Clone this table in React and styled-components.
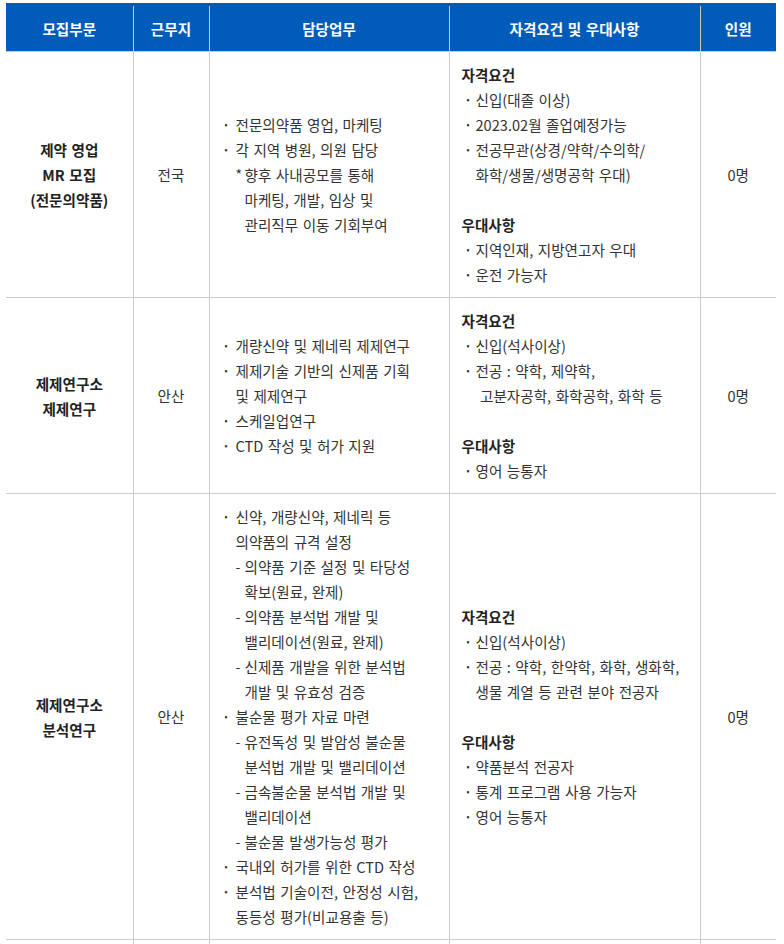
import React from "react"
import styled, { createGlobalStyle } from "styled-components"

const BLUE = "#005cb8"
const LINE = "#cccccc"

const GlobalStyle = createGlobalStyle`
  body {
    margin: 0;
    background: #fff;
    font-family: "Noto Sans CJK KR", "Noto Sans", sans-serif;
    color: #333;
  }
`

const Wrap = styled.div`
  padding: 3px 8px 0 6px;
`

const Table = styled.table`
  width: 770px;
  border-collapse: collapse;
  table-layout: fixed;
  border-top: 3px solid ${BLUE};
  font-size: 14.6px;
  line-height: 25px;
  word-spacing: 1.2px;
`

const HeadCell = styled.th`
  height: 45px;
  padding: 0;
  background: ${BLUE};
  color: #fff;
  font-weight: 700;
  text-align: center;
  border-bottom: 1px solid ${LINE};

  & + & {
    border-left: 1px solid ${LINE};
  }
`

const Cell = styled.td`
  padding: 10px 0 10px ${props => props.padLeft || 0}px;
  vertical-align: middle;
  text-align: ${props => props.align || "left"};
  font-weight: ${props => (props.bold ? 700 : 400)};
  color: ${props => (props.bold ? "#222" : "#333")};
  border-bottom: 1px solid ${LINE};
  white-space: nowrap;

  & + & {
    border-left: 1px solid ${LINE};
  }
`

const SpacerRow = styled.tr`
  height: 160px;
`

const Item = styled.div`
  display: flex;
  margin-left: ${props => props.indent || 0}px;
`

const Marker = styled.span`
  flex: 0 0 ${props => props.width}px;
  font-size: ${props => (props.small ? "9px" : "14px")};
`

const Heading = styled.div`
  font-weight: 700;
  color: #222;
  margin-top: ${props => (props.gap ? "25px" : "0")};
`

const rows = [
  {
    name: ["제약 영업", "MR 모집", "(전문의약품)"],
    place: "전국",
    duties: [
      { mark: "•", lines: ["전문의약품 영업, 마케팅"] },
      { mark: "•", lines: ["각 지역 병원, 의원 담당"] },
      {
        mark: "*",
        sub: true,
        lines: ["향후 사내공모를 통해", "마케팅, 개발, 임상 및", "관리직무 이동 기회부여"],
      },
    ],
    quals: [
      ["신입(대졸 이상)"],
      ["2023.02월 졸업예정가능"],
      ["전공무관(상경/약학/수의학/", "화학/생물/생명공학 우대)"],
    ],
    prefs: [["지역인재, 지방연고자 우대"], ["운전 가능자"]],
    count: "0명",
  },
  {
    name: ["제제연구소", "제제연구"],
    place: "안산",
    duties: [
      { mark: "•", lines: ["개량신약 및 제네릭 제제연구"] },
      { mark: "•", lines: ["제제기술 기반의 신제품 기획", "및 제제연구"] },
      { mark: "•", lines: ["스케일업연구"] },
      { mark: "•", lines: ["CTD 작성 및 허가 지원"] },
    ],
    quals: [
      ["신입(석사이상)"],
      ["전공 : 약학, 제약학,", "\u00a0고분자공학, 화학공학, 화학 등"],
    ],
    prefs: [["영어 능통자"]],
    count: "0명",
  },
  {
    name: ["제제연구소", "분석연구"],
    place: "안산",
    duties: [
      { mark: "•", lines: ["신약, 개량신약, 제네릭 등", "의약품의 규격 설정"] },
      { mark: "-", sub: true, lines: ["의약품 기준 설정 및 타당성", "확보(원료, 완제)"] },
      { mark: "-", sub: true, lines: ["의약품 분석법 개발 및", "밸리데이션(원료, 완제)"] },
      { mark: "-", sub: true, lines: ["신제품 개발을 위한 분석법", "개발 및 유효성 검증"] },
      { mark: "•", lines: ["불순물 평가 자료 마련"] },
      { mark: "-", sub: true, lines: ["유전독성 및 발암성 불순물", "분석법 개발 및 밸리데이션"] },
      { mark: "-", sub: true, lines: ["금속불순물 분석법 개발 및", "밸리데이션"] },
      { mark: "-", sub: true, lines: ["불순물 발생가능성 평가"] },
      { mark: "•", lines: ["국내외 허가를 위한 CTD 작성"] },
      { mark: "•", lines: ["분석법 기술이전, 안정성 시험,", "동등성 평가(비교용출 등)"] },
    ],
    quals: [
      ["신입(석사이상)"],
      ["전공 : 약학, 한약학, 화학, 생화학,", "생물 계열 등 관련 분야 전공자"],
    ],
    prefs: [["약품분석 전공자"], ["통계 프로그램 사용 가능자"], ["영어 능통자"]],
    count: "0명",
  },
]

const Lines = ({ lines }) => (
  <span>
    {lines.map((line, i) => (
      <React.Fragment key={i}>
        {i > 0 && <br />}
        {line}
      </React.Fragment>
    ))}
  </span>
)

const Bullets = ({ list, indent }) =>
  list.map((lines, i) => (
    <Item key={i} indent={indent}>
      <Marker width={9} small>
        •
      </Marker>
      <Lines lines={lines} />
    </Item>
  ))

const App = () => {
  return (
    <Wrap>
      <GlobalStyle />
      <Table>
        <colgroup>
          <col style={{ width: 127 }} />
          <col style={{ width: 76 }} />
          <col style={{ width: 240 }} />
          <col style={{ width: 251 }} />
          <col style={{ width: 76 }} />
        </colgroup>
        <thead>
          <tr>
            <HeadCell>모집부문</HeadCell>
            <HeadCell>근무지</HeadCell>
            <HeadCell>담당업무</HeadCell>
            <HeadCell>자격요건 및 우대사항</HeadCell>
            <HeadCell>인원</HeadCell>
          </tr>
        </thead>
        <tbody>
          {rows.map((row, r) => (
            <tr key={r}>
              <Cell align="center" bold>
                <Lines lines={row.name} />
              </Cell>
              <Cell align="center">{row.place}</Cell>
              <Cell padLeft={15}>
                {row.duties.map((duty, i) => (
                  <Item key={i} indent={duty.sub ? 11 : 0}>
                    <Marker width={duty.sub ? 9 : 11} small={!duty.sub}>
                      {duty.mark}
                    </Marker>
                    <Lines lines={duty.lines} />
                  </Item>
                ))}
              </Cell>
              <Cell padLeft={12}>
                <Heading>자격요건</Heading>
                <Bullets list={row.quals} indent={5} />
                <Heading gap>우대사항</Heading>
                <Bullets list={row.prefs} indent={5} />
              </Cell>
              <Cell align="center">{row.count}</Cell>
            </tr>
          ))}
          <SpacerRow>
            <Cell />
            <Cell />
            <Cell />
            <Cell />
            <Cell />
          </SpacerRow>
        </tbody>
      </Table>
    </Wrap>
  )
}

export default App
